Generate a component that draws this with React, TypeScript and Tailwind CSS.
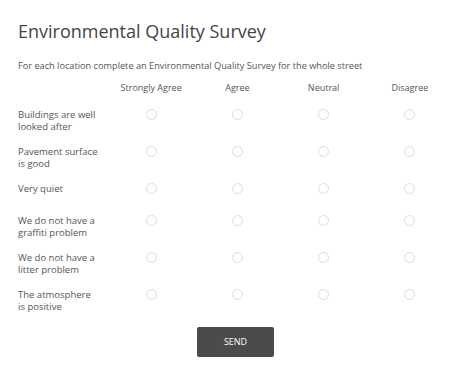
import React from "react";

const cols = ["Strongly Agree", "Agree", "Neutral", "Disagree"];
const rows: { label: string[]; h: string }[] = [
  { label: ["Buildings are well", "looked after"], h: "h-[37px]" },
  { label: ["Pavement surface", "is good"], h: "h-[37px]" },
  { label: ["Very quiet"], h: "h-[32px]" },
  { label: ["We do not have a", "graffiti problem"], h: "h-[37px]" },
  { label: ["We do not have a", "litter problem"], h: "h-[37px]" },
  { label: ["The atmosphere", "is positive"], h: "h-[37px]" },
];

export default function App() {
  return (
    <div
      className="w-[474px] h-[375px] bg-white text-[#555] overflow-hidden"
      style={{ fontFamily: '"Open Sans", "Liberation Sans", sans-serif' }}
    >
      <div className="pl-[18px] pr-[21px] pt-[18px]">
        <h1 className="text-[18px] leading-[26px] text-[#444] font-normal">
          Environmental Quality Survey
        </h1>
        <p className="mt-[16px] text-[9.2px] leading-[12px] text-[#555]">
          For each location complete an Environmental Quality Survey for the whole street
        </p>
        <div className="mt-[10px] grid grid-cols-[90px_1fr_1fr_1fr_1fr] leading-[11px]">
          <div className="h-[27px]" />
          {cols.map((c) => (
            <div key={c} className="h-[27px] text-center text-[9px] text-[#555]">
              {c}
            </div>
          ))}
          {rows.map((r, i) => (
            <React.Fragment key={i}>
              <div className={`${r.h} text-[9.5px] leading-[11.5px] text-[#555]`}>
                {r.label.map((l) => (
                  <div key={l}>{l}</div>
                ))}
              </div>
              {cols.map((c) => (
                <div key={c} className={`${r.h} flex justify-center`}>
                  <span className="block w-[11px] h-[11px] rounded-full border border-[#ddd] bg-white" />
                </div>
              ))}
            </React.Fragment>
          ))}
        </div>
        <div className="flex justify-center mt-[1px]">
          <button className="w-[77px] h-[30px] bg-[#4b4b4b] text-white text-[9px] rounded-[2px]">
            SEND
          </button>
        </div>
      </div>
    </div>
  );
}
